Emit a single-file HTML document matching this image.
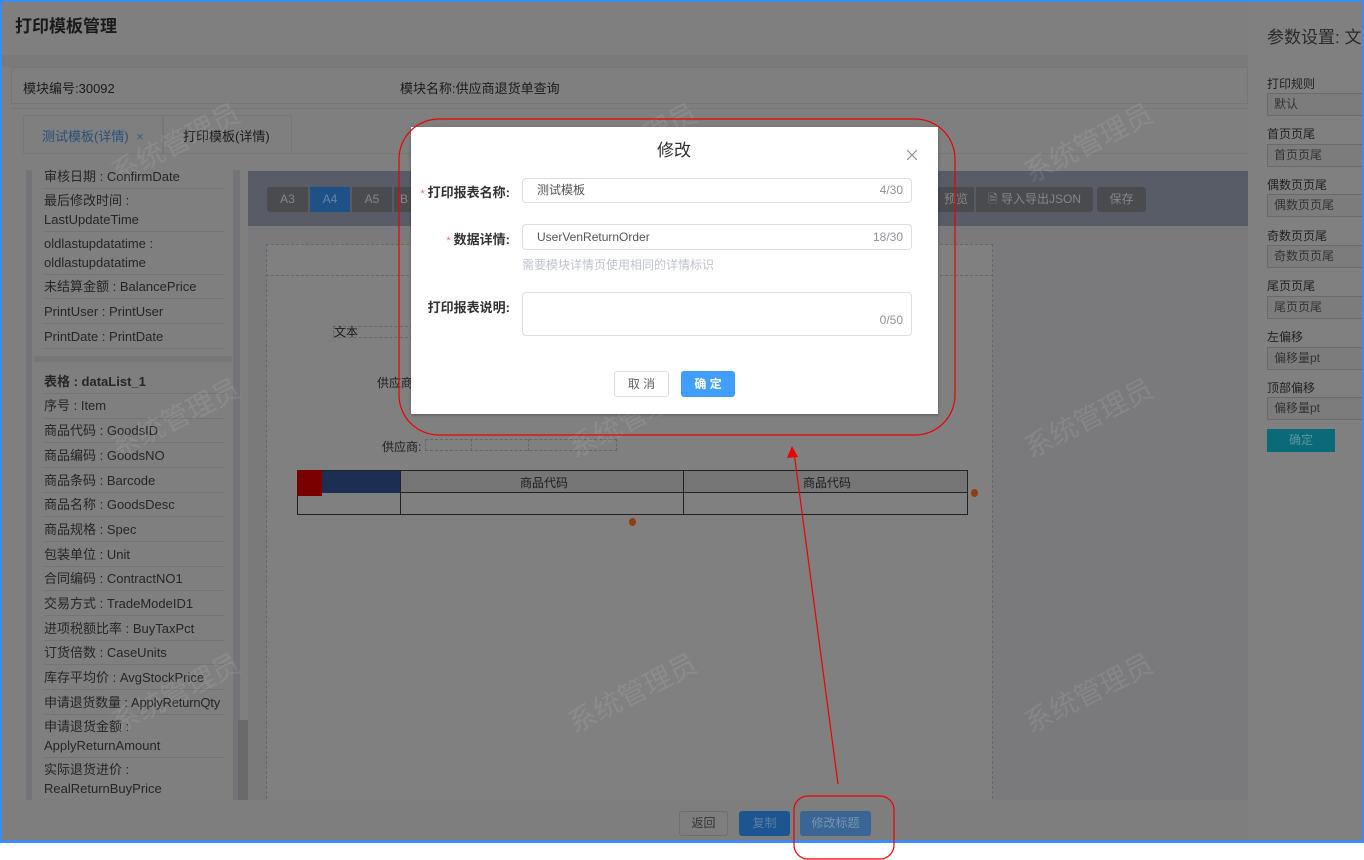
<!DOCTYPE html>
<html><head><meta charset="utf-8"><style>
*{margin:0;padding:0;box-sizing:border-box}
body{width:1364px;height:860px;background:#fff;position:relative;overflow:hidden;font-family:"Liberation Sans","Noto Sans CJK SC",sans-serif;color:#1c1c1c}
.a{position:absolute}
.frame{left:0;top:0;width:1364px;height:843px;background:#7f7f7f;border:2px solid #3b8cf0;border-bottom-width:3px}
.li{position:absolute;left:44px;width:180px;font-size:13px;color:#262626;line-height:19px}
.sep{position:absolute;left:44px;width:180px;height:1px;background:#747474}
.wm{position:absolute;font-size:28px;color:rgba(255,255,255,0.09);transform:rotate(-27deg);white-space:nowrap}
.tb{position:absolute;top:187px;height:25px;background:#4a4b4f;color:#85868a;font-size:12px;text-align:center;line-height:25px}
.rl{position:absolute;left:1267px;font-size:12px;color:#222}
.ri{position:absolute;left:1267px;width:100px;height:23px;border:1px solid #6a6a6a;font-size:12px;color:#333;padding-left:6px;line-height:21px;background:#7c7c7c}
.inp{position:absolute;left:522px;width:390px;border:1px solid #dcdfe6;border-radius:4px;background:#fff;font-size:12px;color:#555;padding-left:14px}
.lab{position:absolute;font-size:13px;font-weight:bold;color:#333;text-align:right;width:120px}
.cnt{position:absolute;right:8px;font-size:12px;color:#909399}
</style></head><body>
<div class="a frame"></div>
<div class="a" style="left:15px;top:12px;font-size:17px;font-weight:bold;color:#1a1a1a">打印模板管理</div>
<div class="a" style="left:2px;top:55px;width:1246px;height:12px;background:#7a7a7a"></div>
<div class="a" style="left:11px;top:67px;width:1237px;height:37px;border:1px solid #767676;background:#7f7f7f"></div>
<div class="a" style="left:23px;top:78px;font-size:13px">模块编号:30092</div>
<div class="a" style="left:400px;top:78px;font-size:13px">模块名称:供应商退货单查询</div>
<div class="a" style="left:11px;top:108px;width:1237px;height:1px;background:#777"></div>
<div class="a" style="left:23px;top:115px;width:140px;height:38px;border:1px solid #777;border-bottom:none"></div>
<div class="a" style="left:163px;top:115px;width:129px;height:38px;border:1px solid #777;border-bottom:none"></div>
<div class="a" style="left:42px;top:126px;font-size:13px;color:#2b4f7c">测试模板(详情) <span style="color:#3e5f88;margin-left:4px">×</span></div>
<div class="a" style="left:183px;top:126px;font-size:13px">打印模板(详情)</div>
<div class="a" style="left:23px;top:153px;width:1225px;height:1px;background:#777"></div>
<div class="a" style="left:26px;top:170px;width:6px;height:630px;background:#727478"></div>
<div class="a" style="left:233px;top:170px;width:7px;height:630px;background:#727478"></div>
<div class="a" style="left:238px;top:720px;width:10px;height:80px;background:#6a6a6a"></div>
<div class="a" style="left:34px;top:356px;width:198px;height:6px;background:#777"></div>
<div class="li" style="top:167px">审核日期 : ConfirmDate</div><div class="sep" style="top:188px"></div>
<div class="li" style="top:191px">最后修改时间 :<br>LastUpdateTime</div><div class="sep" style="top:231px"></div>
<div class="li" style="top:234px">oldlastupdatatime :<br>oldlastupdatatime</div><div class="sep" style="top:274px"></div>
<div class="li" style="top:277px">未结算金额 : BalancePrice</div><div class="sep" style="top:298px"></div>
<div class="li" style="top:302px">PrintUser : PrintUser</div><div class="sep" style="top:323px"></div>
<div class="li" style="top:327px">PrintDate : PrintDate</div><div class="sep" style="top:348px"></div>
<div class="li" style="top:372px;font-weight:bold">表格 : dataList_1</div><div class="sep" style="top:393px"></div>
<div class="li" style="top:396px">序号 : Item</div><div class="sep" style="top:418px"></div>
<div class="li" style="top:421px">商品代码 : GoodsID</div><div class="sep" style="top:442px"></div>
<div class="li" style="top:446px">商品编码 : GoodsNO</div><div class="sep" style="top:467px"></div>
<div class="li" style="top:471px">商品条码 : Barcode</div><div class="sep" style="top:492px"></div>
<div class="li" style="top:495px">商品名称 : GoodsDesc</div><div class="sep" style="top:516px"></div>
<div class="li" style="top:520px">商品规格 : Spec</div><div class="sep" style="top:541px"></div>
<div class="li" style="top:545px">包装单位 : Unit</div><div class="sep" style="top:566px"></div>
<div class="li" style="top:569px">合同编码 : ContractNO1</div><div class="sep" style="top:590px"></div>
<div class="li" style="top:594px">交易方式 : TradeModeID1</div><div class="sep" style="top:615px"></div>
<div class="li" style="top:619px">进项税额比率 : BuyTaxPct</div><div class="sep" style="top:640px"></div>
<div class="li" style="top:643px">订货倍数 : CaseUnits</div><div class="sep" style="top:664px"></div>
<div class="li" style="top:668px">库存平均价 : AvgStockPrice</div><div class="sep" style="top:689px"></div>
<div class="li" style="top:693px;width:190px;letter-spacing:-0.2px">申请退货数量 : ApplyReturnQty</div><div class="sep" style="top:714px"></div>
<div class="li" style="top:717px">申请退货金额 :<br>ApplyReturnAmount</div><div class="sep" style="top:757px"></div>
<div class="li" style="top:760px">实际退货进价 :<br>RealReturnBuyPrice</div><div class="sep" style="top:800px"></div>
<div class="a" style="left:248px;top:171px;width:1000px;height:55px;background:#575c66"></div>
<div class="a" style="left:248px;top:226px;width:1000px;height:574px;background:#7a7a7d"></div>
<div class="tb" style="left:267px;width:41px;border-radius:3px 0 0 3px">A3</div>
<div class="tb" style="left:310px;width:40px;background:#1f5189;color:#6684a6">A4</div>
<div class="tb" style="left:352px;width:40px">A5</div>
<div class="tb" style="left:394px;width:20px">B</div>
<div class="tb" style="left:938px;width:36px">预览</div>
<div class="tb" style="left:976px;width:117px;border-radius:0 3px 3px 0">🗎 导入导出JSON</div>
<div class="tb" style="left:1097px;width:49px;border-radius:3px">保存</div>
<div class="a" style="left:266px;top:244px;width:727px;height:560px;background:#808080;border:1px dashed #666"></div>
<div class="a" style="left:266px;top:275px;width:727px;height:1px;border-top:1px dashed #666"></div>
<div class="a" style="left:333px;top:326px;width:80px;height:12px;border:1px dashed #666;font-size:12px;line-height:11px">文本</div>
<div class="a" style="left:377px;top:374px;font-size:12px">供应商</div>
<div class="a" style="left:382px;top:438px;font-size:12px">供应商:</div>
<div class="a" style="left:425px;top:439px;width:192px;height:12px;border:1px dashed #666"></div>
<div class="a" style="left:471px;top:439px;width:58px;height:12px;border-left:1px dashed #666;border-right:1px dashed #666"></div>
<div class="a" style="left:297px;top:470px;width:671px;height:45px;border:1px solid #222;background:#808080"></div>
<div class="a" style="left:297px;top:471px;width:670px;height:22px;background:#767676;border-bottom:1px solid #222"></div>
<div class="a" style="left:298px;top:471px;width:103px;height:22px;background:#1c2f52"></div>
<div class="a" style="left:297px;top:470px;width:25px;height:26px;background:#7a0000"></div>
<div class="a" style="left:400px;top:470px;width:1px;height:45px;background:#222"></div>
<div class="a" style="left:683px;top:470px;width:1px;height:45px;background:#222"></div>
<div class="a" style="left:520px;top:474px;font-size:12px">商品代码</div>
<div class="a" style="left:803px;top:474px;font-size:12px">商品代码</div>
<div class="a" style="left:971px;top:489px;width:7px;height:8px;border-radius:50%;background:#8c3e10"></div>
<div class="a" style="left:629px;top:518px;width:7px;height:8px;border-radius:50%;background:#8c3e10"></div>
<div class="a" style="left:2px;top:800px;width:1246px;height:40px;background:#7e7e7e"></div>
<div class="a" style="left:679px;top:811px;width:49px;height:25px;border:1px solid #6e6e6e;border-radius:3px;font-size:12px;text-align:center;line-height:23px;color:#333">返回</div>
<div class="a" style="left:739px;top:811px;width:51px;height:25px;background:#1c5590;border-radius:3px;font-size:12px;text-align:center;line-height:25px;color:#5a7fa8">复制</div>
<div class="a" style="left:800px;top:811px;width:71px;height:25px;background:#3a6594;border-radius:3px;font-size:12px;text-align:center;line-height:25px;color:#7894b3">修改标题</div>
<div class="a" style="left:1248px;top:2px;width:114px;height:838px;background:#808080"></div>
<div class="a" style="left:1267px;top:23px;font-size:17px;color:#2a2a2a;white-space:nowrap">参数设置: 文本</div>
<div class="rl" style="top:75px">打印规则</div><div class="ri" style="top:93px">默认</div>
<div class="rl" style="top:125px">首页页尾</div><div class="ri" style="top:144px">首页页尾</div>
<div class="rl" style="top:176px">偶数页页尾</div><div class="ri" style="top:194px">偶数页页尾</div>
<div class="rl" style="top:227px">奇数页页尾</div><div class="ri" style="top:245px">奇数页页尾</div>
<div class="rl" style="top:277px">尾页页尾</div><div class="ri" style="top:296px">尾页页尾</div>
<div class="rl" style="top:328px">左偏移</div><div class="ri" style="top:347px">偏移量pt</div>
<div class="rl" style="top:379px">顶部偏移</div><div class="ri" style="top:397px">偏移量pt</div>
<div class="a" style="left:1267px;top:429px;width:68px;height:23px;background:#0b6a78;color:#5a959e;font-size:12px;text-align:center;line-height:23px">确定</div>
<div class="a" style="left:1362px;top:0;width:2px;height:843px;background:#3b8cf0"></div>
<div class="wm" style="left:105px;top:122px">系统管理员</div>
<div class="wm" style="left:562px;top:122px">系统管理员</div>
<div class="wm" style="left:1018px;top:122px">系统管理员</div>
<div class="wm" style="left:105px;top:397px">系统管理员</div>
<div class="wm" style="left:562px;top:397px">系统管理员</div>
<div class="wm" style="left:1018px;top:397px">系统管理员</div>
<div class="wm" style="left:105px;top:672px">系统管理员</div>
<div class="wm" style="left:562px;top:672px">系统管理员</div>
<div class="wm" style="left:1018px;top:672px">系统管理员</div>
<div class="a" style="left:411px;top:127px;width:527px;height:287px;background:#fff;box-shadow:0 1px 3px rgba(0,0,0,.3)"></div>
<div class="a" style="left:657px;top:136px;font-size:17px;color:#303133">修改</div>
<svg class="a" style="left:907px;top:150px" width="10" height="10"><path d="M0 0L10 10M10 0L0 10" stroke="#909399" stroke-width="1.2"/></svg>
<div class="lab" style="left:390px;top:182px"><span style="color:#f56c6c;font-weight:normal;font-size:11px">* </span>打印报表名称:</div>
<div class="inp" style="top:178px;height:25px;line-height:23px">测试模板<span class="cnt">4/30</span></div>
<div class="lab" style="left:390px;top:229px"><span style="color:#f56c6c;font-weight:normal;font-size:11px">* </span>数据详情:</div>
<div class="inp" style="top:224px;height:26px;line-height:24px">UserVenReturnOrder<span class="cnt">18/30</span></div>
<div class="a" style="left:522px;top:256px;font-size:12px;color:#c0c4cc">需要模块详情页使用相同的详情标识</div>
<div class="lab" style="left:390px;top:297px">打印报表说明:</div>
<div class="inp" style="top:292px;height:44px"><span class="cnt" style="top:20px">0/50</span></div>
<div class="a" style="left:614px;top:371px;width:55px;height:26px;border:1px solid #dcdfe6;border-radius:3px;font-size:12px;color:#606266;text-align:center;line-height:24px">取 消</div>
<div class="a" style="left:681px;top:371px;width:54px;height:26px;background:#409eff;border-radius:3px;font-size:12px;color:#fff;text-align:center;line-height:26px;font-weight:bold">确 定</div>
<svg class="a" style="left:0;top:0" width="1364" height="860">
<rect x="399" y="119" width="556" height="316" rx="40" fill="none" stroke="#e00" stroke-width="1.2"/>
<rect x="794" y="796" width="100" height="63" rx="14" fill="none" stroke="#e00" stroke-width="1.2"/>
<line x1="838" y1="784" x2="794" y2="452" stroke="#e00" stroke-width="1.2"/>
<path d="M792 446L787 458L798 457Z" fill="#e00"/>
</svg>
</body></html>
